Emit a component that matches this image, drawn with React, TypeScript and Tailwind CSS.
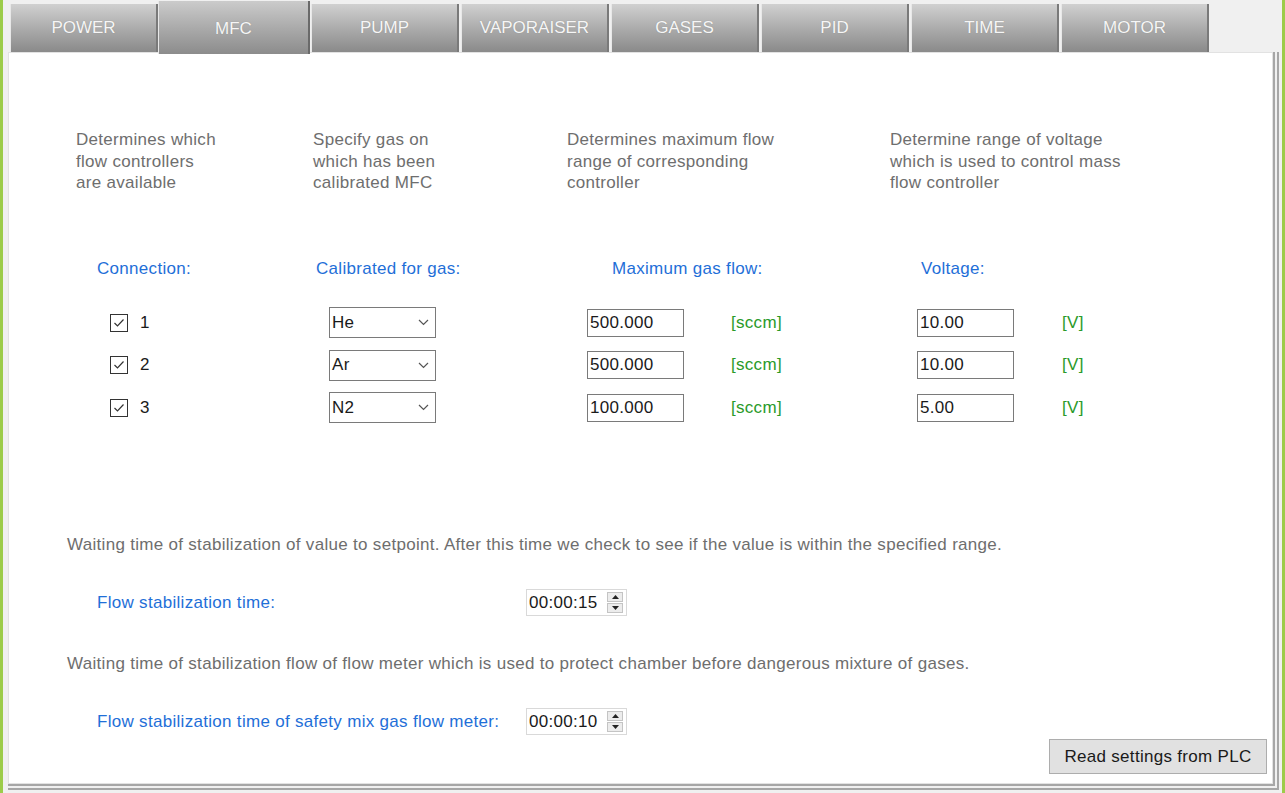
import { useState } from 'react'

const tabs = ['POWER', 'MFC', 'PUMP', 'VAPORAISER', 'GASES', 'PID', 'TIME', 'MOTOR']

const rows = [
  { n: '1', gas: 'He', flow: '500.000', volt: '10.00' },
  { n: '2', gas: 'Ar', flow: '500.000', volt: '10.00' },
  { n: '3', gas: 'N2', flow: '100.000', volt: '5.00' },
]

function CheckBox() {
  return (
    <svg width="18" height="18" viewBox="0 0 18 18">
      <rect x="0.5" y="0.5" width="17" height="17" fill="#fff" stroke="#333" />
      <path d="M4.5 9 L7.5 12 L13.5 5.5" fill="none" stroke="#333" strokeWidth="1.2" />
    </svg>
  )
}

function Spinner({ value }: { value: string }) {
  return (
    <div className="flex h-[27px] w-[101px] items-center border border-[#d9d9d9] bg-white pl-[2px]">
      <span className="flex-1 text-[17px] tracking-[0.3px] text-[#1a1a1a]">{value}</span>
      <div className="mr-[3px] flex flex-col gap-[1px]">
        <div className="flex h-[10px] w-[16px] items-center justify-center border border-[#c4c4c4] bg-[#ececec]">
          <svg width="7" height="4" viewBox="0 0 7 4"><path d="M0 4 L3.5 0 L7 4 Z" fill="#222" /></svg>
        </div>
        <div className="flex h-[10px] w-[16px] items-center justify-center border border-[#c4c4c4] bg-[#ececec]">
          <svg width="7" height="4" viewBox="0 0 7 4"><path d="M0 0 L3.5 4 L7 0 Z" fill="#222" /></svg>
        </div>
      </div>
    </div>
  )
}

export default function App() {
  const [active, setActive] = useState('MFC')

  return (
    <div
      className="h-[793px] w-[1285px] overflow-hidden border-l-[3px] border-r-[3px] border-l-[#9ccc4a] border-r-[#9ccc4a] bg-[#f0f0f0] text-[17px] leading-[24px] tracking-[0.3px]"
      style={{ fontFamily: '"Liberation Sans", Arial, sans-serif' }}
    >
      {/* tab strip */}
      <div className="flex h-[52px] items-end gap-[2px] pl-[7px]">
        {tabs.map((t) => {
          const sel = t === active
          return (
            <button
              key={t}
              onClick={() => setActive(t)}
              className={
                sel
                  ? 'relative z-10 mb-[-2px] ml-[-2px] mr-[-1px] flex h-[53px] w-[152px] items-center justify-center border-r-2 border-r-[#6a6a6a] border-l border-l-[#e8e8e8] bg-gradient-to-b from-[#cbcbcb] to-[#8c8c8c] pt-[3px] tracking-normal text-[#f6f6f6] [text-shadow:0_0_1px_#888]'
                  : 'flex h-[48px] w-[148px] items-center justify-center border-r-2 border-r-[#7a7a7a] border-l border-l-[#e8e8e8] bg-gradient-to-b from-[#d0d0d0] to-[#8a8a8a] tracking-normal text-[#f6f6f6] [text-shadow:0_0_1px_#888]'
              }
            >
              {t}
            </button>
          )
        })}
      </div>

      {/* content panel */}
      <div className="ml-[5px] mr-[3px] h-[738px] border-b-[6px] border-double border-b-[#a6a6a6] border-r-[6px] border-r-[#a6a6a6]">
        <div className="flex h-full flex-col border border-[#e2e2e2] bg-white pl-px">
          {/* descriptions */}
          <div className="mt-[76px] flex leading-[21.5px] text-[#6e6e6e]">
            <div className="ml-[66px] w-[237px]">Determines which<br />flow controllers<br />are available</div>
            <div className="w-[254px]">Specify gas on<br />which has been<br />calibrated MFC</div>
            <div className="w-[323px]">Determines maximum flow<br />range of corresponding<br />controller</div>
            <div>Determine range of voltage<br />which is used to control mass<br />flow controller</div>
          </div>

          {/* headers */}
          <div className="mt-[63px] flex text-[#1f6fd8]">
            <div className="ml-[87px] w-[219px]">Connection:</div>
            <div className="w-[296px]">Calibrated for gas:</div>
            <div className="w-[309px]">Maximum gas flow:</div>
            <div>Voltage:</div>
          </div>

          {/* rows */}
          <div className="mt-[21px] flex flex-col">
            {rows.map((r) => (
              <div key={r.n} className="flex h-[42.5px] items-center text-[#1a1a1a]">
                <div className="ml-[100px] flex w-[219px] items-center gap-[12px]">
                  <CheckBox />
                  <span>{r.n}</span>
                </div>
                <div className="flex h-[31px] w-[107px] items-center justify-between border border-[#7a7a7a] bg-white pl-[2px] pr-[6px]">
                  <span>{r.gas}</span>
                  <svg width="11" height="7" viewBox="0 0 11 7"><path d="M1 1 L5.5 5.5 L10 1" fill="none" stroke="#555" strokeWidth="1.2" /></svg>
                </div>
                <div className="ml-[151px] flex h-[28px] w-[97px] items-center border border-[#7a7a7a] bg-white pl-[2px]">{r.flow}</div>
                <div className="ml-[47px] w-[186px] text-[#2a9a2a]">[sccm]</div>
                <div className="flex h-[28px] w-[97px] items-center border border-[#7a7a7a] bg-white pl-[2px]">{r.volt}</div>
                <div className="ml-[48px] text-[#2a9a2a]">[V]</div>
              </div>
            ))}
          </div>

          {/* stabilization */}
          <div className="ml-[57px] mt-[104px] text-[#6e6e6e]">
            Waiting time of stabilization of value to setpoint. After this time we check to see if the value is within the specified range.
          </div>
          <div className="mt-[32px] flex items-center">
            <div className="ml-[87px] w-[429px] text-[#1f6fd8]">Flow stabilization time:</div>
            <Spinner value="00:00:15" />
          </div>
          <div className="ml-[57px] mt-[36px] text-[#6e6e6e]">
            Waiting time of stabilization flow of flow meter which is used to protect chamber before dangerous mixture of gases.
          </div>
          <div className="mt-[32px] flex items-center">
            <div className="ml-[87px] w-[429px] text-[#1f6fd8]">Flow stabilization time of safety mix gas flow meter:</div>
            <Spinner value="00:00:10" />
          </div>
          <div className="flex justify-end pr-[5px]">
            <button className="mt-[4px] h-[35px] w-[218px] border border-[#adadad] bg-[#e1e1e1] text-[#1a1a1a]">
              Read settings from PLC
            </button>
          </div>
        </div>
      </div>
    </div>
  )
}
